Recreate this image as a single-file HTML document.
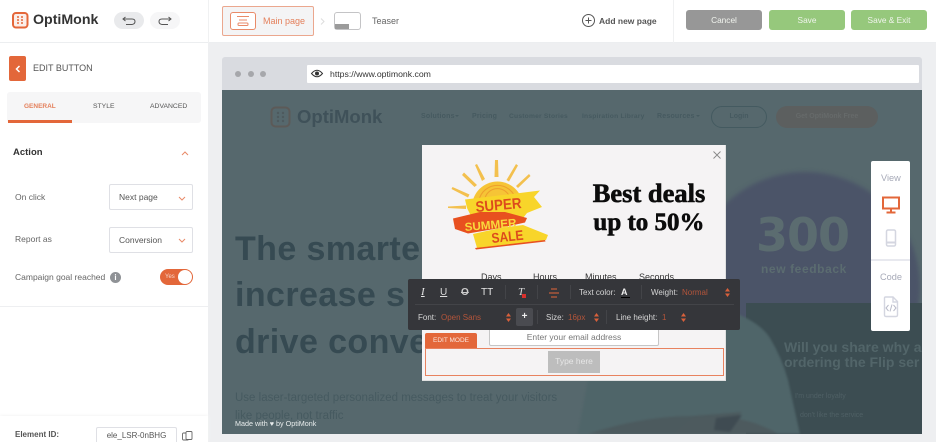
<!DOCTYPE html>
<html><head><meta charset="utf-8"><style>
html,body{margin:0;padding:0;width:936px;height:442px;overflow:hidden}
body{position:relative;background:#eeeff1;font-family:"Liberation Sans",sans-serif;color:#555}
div,span{position:absolute;white-space:nowrap;box-sizing:border-box}
svg{position:absolute;overflow:visible}
#r{left:0;top:0;width:936px;height:442px;overflow:hidden;filter:blur(.35px)}
.t{line-height:1}
.sel{left:109px;width:84px;height:26px;background:#fff;border:1px solid #dfe0e5;border-radius:2px;font-size:8.500px;color:#555;line-height:25px;padding-left:9px}
.btn{top:10px;width:76px;height:20px;border-radius:3px;color:#f1f4ee;font-size:8.300px;text-align:center;line-height:21px}
.nav{top:113px;font-size:7px;color:#465a60;font-weight:bold;letter-spacing:.2px}
.h{left:235px;font-size:34px;font-weight:bold;color:#364a52;letter-spacing:.4px;line-height:1}
.o{color:#b4553a;font-size:8px}
</style></head><body><div id="r">

<!-- top bar -->
<div style="left:0;top:0;width:936px;height:43px;background:#fff;border-bottom:1px solid #eceef0"></div>
<div style="left:208px;top:0;width:1px;height:43px;background:#f0f1f2"></div>
<div style="left:673px;top:0;width:1px;height:43px;background:#f0f1f2"></div>
<svg style="left:12px;top:12px" width="17" height="17" viewBox="0 0 17 17"><rect x="1" y="1" width="14.500" height="14.500" rx="3" fill="#fbeee9" stroke="#e4673a" stroke-width="2"/><g fill="#e4673a"><circle cx="6" cy="5" r="1"/><circle cx="10" cy="5" r="1"/><circle cx="6" cy="8" r="1"/><circle cx="10" cy="8" r="1"/><circle cx="6" cy="11" r="1"/><circle cx="10" cy="11" r="1"/></g></svg>
<div class="t" style="left:33px;top:13px;font-size:14.200px;font-weight:bold;color:#333">OptiMonk</div>
<div style="left:114px;top:12px;width:30px;height:17px;border-radius:9px;background:#e9eaec"></div>
<div style="left:150px;top:12px;width:30px;height:17px;border-radius:9px;background:#f6f6f7"></div>
<svg style="left:122px;top:16px" width="14" height="10" fill="none" stroke="#555" stroke-width="1"><path d="M1 3H10Q13 3 13 5.500T10 8.500H4M3.500 1L1 3L3.500 5"/></svg>
<svg style="left:158px;top:16px" width="14" height="10" fill="none" stroke="#555" stroke-width="1"><path d="M13 3H4Q1 3 1 5.500T4 8.500H10M10.500 1L13 3L10.500 5"/></svg>

<div style="left:222px;top:6px;width:92px;height:30px;border:1px solid #eba78e;border-radius:2px;background:#f4f4f5"></div>
<div style="left:230px;top:12px;width:26px;height:18px;border:1px solid #e98a68;border-radius:3px;background:#fff"></div>
<svg style="left:235px;top:16px" width="16" height="11" fill="none" stroke="#e98a68"><path d="M2 .5H14M4 4H12"/><rect x="3" y="7" width="10" height="2.500" rx="1"/></svg>
<div class="t" style="left:263px;top:16.500px;font-size:9px;color:#e4805c">Main page</div>
<svg style="left:320px;top:17px" width="6" height="9" fill="none" stroke="#ddd"><path d="M1 1.500L4 4.500L1 7.500"/></svg>
<div style="left:334px;top:12px;width:27px;height:18px;border:1px solid #c4c4c6;border-radius:3px;background:#fff"></div>
<div style="left:335px;top:24px;width:14px;height:5px;background:#9b9b9b"></div>
<div class="t" style="left:372px;top:16.500px;font-size:9px;color:#666">Teaser</div>
<svg style="left:582px;top:14px" width="13" height="13" fill="none" stroke="#555"><circle cx="6.500" cy="6.500" r="6"/><path d="M6.500 3.500V9.500M3.500 6.500H9.500"/></svg>
<div class="t" style="left:599px;top:16.500px;font-size:8.500px;font-weight:bold;color:#555">Add new page</div>
<div class="btn" style="left:686px;background:#979797">Cancel</div>
<div class="btn" style="left:769px;background:#96c87c">Save</div>
<div class="btn" style="left:851px;background:#96c87c">Save &amp; Exit</div>

<!-- left panel -->
<div style="left:0;top:43px;width:208px;height:399px;background:#fff"></div>
<div style="left:9px;top:56px;width:17px;height:25px;background:#e3673a;border-radius:2px"></div>
<svg style="left:15px;top:65px" width="6" height="8" fill="none" stroke="#fff" stroke-width="1.500"><path d="M4.500 1L1.500 4L4.500 7"/></svg>
<div class="t" style="left:33px;top:64px;font-size:9px;color:#555">EDIT BUTTON</div>
<div style="left:7px;top:92px;width:194px;height:31px;background:#f6f6f7;border-radius:3px"></div>
<div style="left:8px;top:120px;width:64px;height:3px;background:#e3673a"></div>
<div class="t" style="left:24px;top:103.500px;font-size:6.500px;font-weight:bold;color:#e4805c">GENERAL</div>
<div class="t" style="left:93px;top:103.500px;font-size:6.800px;color:#555">STYLE</div>
<div class="t" style="left:150px;top:103.500px;font-size:6.800px;color:#555">ADVANCED</div>
<div class="t" style="left:13px;top:147.500px;font-size:9.500px;font-weight:bold;color:#333">Action</div>
<svg style="left:181px;top:151px" width="8" height="5" fill="none" stroke="#e98a68"><path d="M1 4L4 1L7 4"/></svg>
<div class="t" style="left:15px;top:193px;font-size:8.500px;color:#666">On click</div>
<div class="sel" style="top:184px">Next page</div>
<svg style="left:178px;top:196px" width="8" height="5" fill="none" stroke="#e98a68"><path d="M1 1L4 4L7 1"/></svg>
<div class="t" style="left:15px;top:235px;font-size:8.500px;color:#666">Report as</div>
<div class="sel" style="top:227px">Conversion</div>
<svg style="left:178px;top:238px" width="8" height="5" fill="none" stroke="#e98a68"><path d="M1 1L4 4L7 1"/></svg>
<div class="t" style="left:15px;top:273px;font-size:8.500px;color:#666">Campaign goal reached</div>
<div style="left:110px;top:272px;width:11px;height:11px;border-radius:50%;background:#8f9296;color:#fff;font-size:8px;font-weight:bold;text-align:center;line-height:11px">i</div>
<div style="left:160px;top:269px;width:33px;height:16px;border-radius:8px;background:#e3673a"></div>
<div class="t" style="left:165px;top:274px;font-size:6px;color:#f6d6ca">Yes</div>
<div style="left:178px;top:270px;width:14px;height:14px;border-radius:50%;background:#fff"></div>
<div style="left:0;top:306px;width:208px;height:1px;background:#eeeff1"></div>
<div style="left:0;top:416px;width:208px;height:26px;background:#fff;box-shadow:0 -1px 3px #f5f5f5"></div>
<div class="t" style="left:15px;top:431px;font-size:8px;font-weight:bold;color:#555">Element ID:</div>
<div style="left:96px;top:427px;width:81px;height:15px;border:1px solid #dfe0e5;border-bottom:0;border-radius:2px 2px 0 0;background:#fff;font-size:8px;color:#555;text-align:center;line-height:15px">ele_LSR-0nBHG</div>
<svg style="left:182px;top:431px" width="11" height="11" fill="none" stroke="#666" stroke-width=".9"><rect x=".5" y="2" width="6" height="7" rx="1"/><rect x="4" y=".5" width="6" height="8" rx="1" fill="#fff"/></svg>

<!-- browser frame -->
<div style="left:222px;top:57px;width:700px;height:34px;background:#d9dbe0;border-radius:3px 3px 0 0"></div>
<div style="left:235px;top:71px;width:6px;height:6px;border-radius:50%;background:#a6a7ab"></div>
<div style="left:248px;top:71px;width:6px;height:6px;border-radius:50%;background:#a6a7ab"></div>
<div style="left:260px;top:71px;width:6px;height:6px;border-radius:50%;background:#a6a7ab"></div>
<div style="left:307px;top:65px;width:612px;height:18px;background:#fff;border-radius:1px"></div>
<svg style="left:311px;top:69px" width="12" height="9"><path d="M.5 4.500Q6-2 11.500 4.500Q6 11 .5 4.500Z" fill="none" stroke="#333"/><circle cx="6" cy="4.500" r="2" fill="#333"/></svg>
<div class="t" style="left:330px;top:69.500px;font-size:8.700px;color:#333">https://www.optimonk.com</div>

<!-- page content -->
<div style="left:222px;top:90px;width:700px;height:344px;background:#56686d;overflow:hidden">
  <div style="left:468px;top:82px;width:230px;height:230px;border-radius:50%;background:#4b5468;filter:blur(2px)"></div>
  <div style="left:524px;top:213px;width:176px;height:131px;background:#3c4d52"></div>
  <div style="left:534px;top:122px;font-size:46px;font-weight:bold;color:#5b6c70;font-family:'DejaVu Sans',sans-serif;letter-spacing:-1px;line-height:1">300</div>
  <div style="left:539px;top:173px;font-size:12px;font-weight:bold;color:#5b6c70;letter-spacing:.6px;line-height:1">new feedback</div>
  <svg style="left:0;top:0;filter:blur(1px)" width="700" height="344">
    <path d="M356 344L368 280H500V220L518 225Q540 235 548 248Q560 268 566 290L578 344Z" fill="#4f6569"/>
    <path d="M366 344Q420 326 470 326L520 322L500 344Z" fill="#4c5a5e"/>
    <path d="M470 328Q520 322 556 344H450Z" fill="#4d5a5e"/>
    <path d="M494 328L520 325L508 342L492 340Z" fill="#3f4b52"/>
  </svg>
  <div style="left:562px;top:250px;font-size:14px;font-weight:bold;color:#526569;line-height:15px">Will you share why a<br>ordering the Flip ser</div>
  <div style="left:573px;top:303px;font-size:7px;color:#4f6065">I'm under loyalty</div>
  <div style="left:578px;top:322px;font-size:7px;color:#4f6065">don't like the service</div>
</div>
<svg style="left:270px;top:106px" width="22" height="22" fill="none"><rect x="1.500" y="1.500" width="18" height="19" rx="4" stroke="#5c5a58" stroke-width="2"/><g fill="#4e5a5e"><circle cx="8" cy="7" r="1.200"/><circle cx="13" cy="7" r="1.200"/><circle cx="8" cy="11" r="1.200"/><circle cx="13" cy="11" r="1.200"/><circle cx="8" cy="15" r="1.200"/><circle cx="13" cy="15" r="1.200"/></g></svg>
<div class="t" style="left:297px;top:108px;font-size:18.500px;font-weight:bold;color:#3f5159">OptiMonk</div>
<div class="nav" style="left:421px">Solutions</div>
<div style="left:455px;top:115px;border:2px solid transparent;border-top-color:#465a60"></div>
<div class="nav" style="left:472px">Pricing</div>
<div class="nav" style="left:509px;font-size:6.700px">Customer Stories</div>
<div class="nav" style="left:582px;font-size:6.700px">Inspiration Library</div>
<div class="nav" style="left:657px">Resources</div>
<div style="left:696px;top:115px;border:2px solid transparent;border-top-color:#465a60"></div>
<div style="left:711px;top:106px;width:56px;height:22px;border:1.500px solid #445a60;border-radius:11px;font-size:7px;font-weight:bold;color:#465a60;text-align:center;line-height:19px">Login</div>
<div style="left:776px;top:106px;width:102px;height:22px;background:#5c5f5f;border-radius:11px;font-size:7px;font-weight:bold;color:#666a6a;text-align:center;line-height:22px">Get OptiMonk Free</div>
<div class="h" style="top:232px">The smarte</div>
<div class="h" style="top:278px">increase s</div>
<div class="h" style="top:325px">drive conve</div>
<div class="t" style="left:235px;top:393px;font-size:11.500px;color:#465a60">Use laser-targeted personalized messages to treat your visitors</div>
<div class="t" style="left:235px;top:411px;font-size:11.500px;color:#465a60">like people, not traffic</div>
<div class="t" style="left:235px;top:420px;font-size:7.200px;color:#e8ecec">Made with ♥ by OptiMonk</div>

<!-- side panel -->
<div style="left:871px;top:161px;width:39px;height:170px;background:#fff;border-radius:2px"></div>
<div class="t" style="left:881px;top:174px;font-size:9.200px;color:#a7aab8">View</div>
<svg style="left:881px;top:196px" width="20" height="18" fill="none" stroke="#e3673a" stroke-width="2"><rect x="2" y="1.500" width="16" height="11"/><path d="M10 13V16M5.500 16.500H14.500"/></svg>
<svg style="left:885px;top:229px" width="12" height="19" fill="none" stroke="#d4d6e0" stroke-width="1.500"><rect x="1.500" y="1" width="9" height="16" rx="1.500"/><path d="M1.500 13.500H10.500" stroke-width="2"/></svg>
<div style="left:871px;top:259px;width:39px;height:2px;background:#e8e9ef"></div>
<div class="t" style="left:880px;top:273px;font-size:9.200px;color:#a7aab8">Code</div>
<svg style="left:883px;top:296px" width="16" height="22" fill="none" stroke="#d4d6e0" stroke-width="1.400"><path d="M1.500 2Q1.500 1 2.500 1H10L14.500 5.500V19Q14.500 20.500 13 20.500H3Q1.500 20.500 1.500 19Z"/><path d="M10 1V6H14.500"/><path d="M5.500 9L3 12L5.500 15M10.500 9L13 12L10.500 15M9 8.500L7 15.500" stroke="#b9bbc9" stroke-width="1"/></svg>

<!-- popup -->
<div style="left:422px;top:145px;width:304px;height:236px;background:#f5f3f4;border-right:1px solid #dfe0e0;border-bottom:1px solid #dfe0e0"></div>
<svg style="left:713px;top:151px" width="8" height="8" stroke="#888" stroke-width=".9"><path d="M.5 .5L7.500 7.500M7.500 .5L.5 7.500"/></svg>
<svg style="left:440px;top:150px" width="130" height="110" viewBox="440 150 130 110">
 <g fill="#f3c04e">
  <path d="M495 160L498 160L498.500 177H494.500Z"/>
  <path d="M475 165L477 164L485 179L482 181Z"/>
  <path d="M462 175L464 172.500L477 185L474.500 187Z"/>
  <path d="M451.500 189L452.500 187L469.500 194.500L468 197.500Z"/>
  <path d="M448 206.500V208L466 209V205.500Z"/>
  <path d="M516 164L518 165.500L509 181.500L506.500 180Z"/>
  <path d="M529 174L530.500 176L518 188L516 186Z"/>
 </g>
 <path d="M472 207A25.500 25.500 0 0 1 523 207Z" fill="#f6c436"/>
 <path d="M479 200A19 19 0 0 1 516 200M485 198A13 13 0 0 1 510 198" fill="none" stroke="#ee9f2c" stroke-width="1"/>
 <path d="M465 199.500L520 193L540 190.500L534 197L542 207L527 213L520 222L473 220L467 208Z" fill="#f8d52a"/>
 <path d="M453 218.500L480 212L505 212L527 218L525 222.500L500 228L468 233.500L455 229Z" fill="#e8501f"/>
 <path d="M473 234L500 228L523 225L548 235L546 240L477 248Z" fill="#f8d52a"/>
 <path d="M475 248L545 240L545.500 241.500L476 249.500Z" fill="#e8501f"/>
 <text x="476" y="212" textLength="46" lengthAdjust="spacingAndGlyphs" font-family="Liberation Sans" font-weight="bold" font-size="15" fill="#dd4b1c" transform="rotate(-5 476 212)">SUPER</text>
 <text x="465" y="231" textLength="52" lengthAdjust="spacingAndGlyphs" font-family="Liberation Sans" font-weight="bold" font-size="11.500" fill="#f9d93c" transform="rotate(-5 465 231)">SUMMER</text>
 <text x="492" y="243" textLength="32" lengthAdjust="spacingAndGlyphs" font-family="Liberation Sans" font-weight="bold" font-size="14" fill="#dd4b1c" transform="rotate(-6 492 243)">SALE</text>
</svg>
<div class="t" style="left:572px;top:178px;width:154px;text-align:center;font-family:'Liberation Serif',serif;font-weight:bold;font-size:26.500px;color:#0c0c0c;line-height:30px;-webkit-text-stroke:.6px #0c0c0c">Best deals</div>
<div class="t" style="left:572px;top:208px;width:154px;text-align:center;font-family:'Liberation Serif',serif;font-weight:bold;font-size:25px;color:#0c0c0c;line-height:30px;-webkit-text-stroke:.6px #0c0c0c">up to 50%</div>
<div class="t" style="left:481px;top:273px;font-size:9px;color:#333">Days</div>
<div class="t" style="left:533px;top:273px;font-size:9px;color:#333">Hours</div>
<div class="t" style="left:585px;top:273px;font-size:9px;color:#333">Minutes</div>
<div class="t" style="left:639px;top:273px;font-size:9px;color:#333">Seconds</div>
<div style="left:489px;top:325px;width:170px;height:21px;background:#fff;border:1px solid #c6c6c6;border-radius:2px;font-size:8.500px;color:#777;text-align:center;line-height:21px;padding-top:1px">Enter your email address</div>
<div style="left:425px;top:333px;width:52px;height:15px;background:#e3673a;border-radius:2px 2px 0 0;color:#fbe7df;font-size:6.500px;text-align:center;line-height:15px">EDIT MODE</div>
<div style="left:425px;top:348px;width:299px;height:28px;border:1.500px solid #e8825f"></div>
<div style="left:548px;top:351px;width:52px;height:22px;background:#bdbdbd;color:#e6e6e6;font-size:8.500px;text-align:center;line-height:21px">Type here</div>

<!-- toolbar -->
<div style="left:408px;top:279px;width:332px;height:51px;background:#35363a;border-radius:2px"></div>
<div style="left:415px;top:304px;width:319px;height:1px;background:#434448"></div>
<div style="left:505px;top:285px;width:1px;height:14px;background:#434448"></div>
<div style="left:537px;top:285px;width:1px;height:14px;background:#434448"></div>
<div style="left:570px;top:285px;width:1px;height:14px;background:#434448"></div>
<div style="left:641px;top:285px;width:1px;height:14px;background:#434448"></div>
<div style="left:537px;top:310px;width:1px;height:14px;background:#434448"></div>
<div style="left:606px;top:310px;width:1px;height:14px;background:#434448"></div>
<div class="t" style="left:421px;top:287px;font-size:11px;font-style:italic;color:#e6e6e6;font-family:'Liberation Serif',serif;text-decoration:underline">I</div>
<div class="t" style="left:440px;top:288px;font-size:10px;color:#ddd;text-decoration:underline">U</div>
<div class="t" style="left:461px;top:288px;font-size:10px;font-weight:bold;color:#ccc;text-decoration:line-through">O</div>
<div class="t" style="left:481px;top:288px;font-size:10px;color:#e6e6e6">TT</div>
<div class="t" style="left:518px;top:287px;font-size:11px;font-style:italic;color:#ddd;font-family:'Liberation Serif',serif">T</div>
<div style="left:522px;top:294px;width:4px;height:4px;background:#d9302c"></div>
<svg style="left:549px;top:288px" width="10" height="10" stroke="#e3673a"><path d="M2 1H8M0 5H10M2 9H8"/></svg>
<div class="t" style="left:579px;top:289px;font-size:8px;color:#d5d5d5">Text color:</div>
<div class="t" style="left:621px;top:288px;font-size:9px;font-weight:bold;color:#eee">A</div>
<div style="left:621px;top:297px;width:9px;height:1px;background:#000"></div>
<div class="t" style="left:651px;top:289px;font-size:8px;color:#d5d5d5">Weight:</div>
<div class="t o" style="left:682px;top:289px">Normal</div>
<svg style="left:725px;top:288px" width="5" height="9" fill="#d9603a"><path d="M2.500 0L5 3.500H0ZM2.500 9L0 5.500H5Z"/></svg>
<div class="t" style="left:418px;top:314px;font-size:8px;color:#d5d5d5">Font:</div>
<div class="t o" style="left:441px;top:314px">Open Sans</div>
<svg style="left:506px;top:313px" width="5" height="9" fill="#d9603a"><path d="M2.500 0L5 3.500H0ZM2.500 9L0 5.500H5Z"/></svg>
<div style="left:516px;top:308px;width:17px;height:18px;background:#4a4b50;border-radius:2px;color:#eee;font-size:10px;font-weight:bold;text-align:center;line-height:17px">+</div>
<div class="t" style="left:546px;top:314px;font-size:8px;color:#d5d5d5">Size:</div>
<div class="t o" style="left:568px;top:314px">16px</div>
<svg style="left:594px;top:313px" width="5" height="9" fill="#d9603a"><path d="M2.500 0L5 3.500H0ZM2.500 9L0 5.500H5Z"/></svg>
<div class="t" style="left:616px;top:314px;font-size:8px;color:#d5d5d5">Line height:</div>
<div class="t o" style="left:662px;top:314px">1</div>
<svg style="left:681px;top:313px" width="5" height="9" fill="#d9603a"><path d="M2.500 0L5 3.500H0ZM2.500 9L0 5.500H5Z"/></svg>
</div></body></html>
